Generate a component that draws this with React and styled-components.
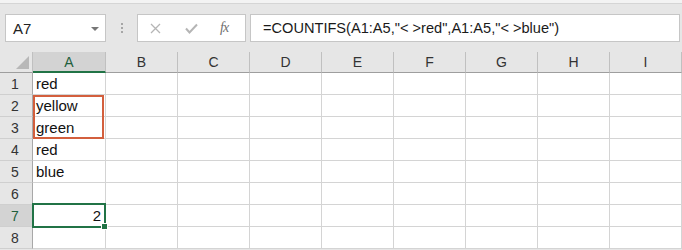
import React from "react";
import styled, { createGlobalStyle } from "styled-components";

const GlobalStyle = createGlobalStyle`
  html, body {
    margin: 0;
    padding: 0;
    background: #ffffff;
    font-family: "Liberation Sans", Arial, sans-serif;
  }
  #root {
    width: 682px;
    height: 250px;
    overflow: hidden;
  }
`;

const columns = ["A", "B", "C", "D", "E", "F", "G", "H", "I"];

const values = {
  1: { text: "red" },
  2: { text: "yellow" },
  3: { text: "green" },
  4: { text: "red" },
  5: { text: "blue" },
  7: { text: "2", number: true },
};

const Window = styled.div`
  width: 682px;
  height: 250px;
  display: flex;
  flex-direction: column;
  background: #e6e6e6;
`;

const TopStrip = styled.div`
  height: 3px;
  background: #f3f3f3;
  border-bottom: 1px solid #d5d5d5;
`;

const FormulaBar = styled.div`
  height: 48px;
  box-sizing: border-box;
  padding: 10px 2px 10px 5px;
  display: flex;
  align-items: stretch;
`;

const Box = styled.div`
  box-sizing: border-box;
  background: #ffffff;
  border: 1px solid #c6c6c6;
  display: flex;
  align-items: center;
`;

const NameBox = styled(Box)`
  width: 101px;
  padding: 0 6px 0 7px;
  justify-content: space-between;
  font-size: 15px;
  color: #222;
`;

const Caret = styled.span`
  width: 0;
  height: 0;
  border-left: 4px solid transparent;
  border-right: 4px solid transparent;
  border-top: 4px solid #777;
  margin-top: 1px;
`;

const Grip = styled.div`
  width: 31px;
  display: flex;
  flex-direction: column;
  align-items: center;
  justify-content: center;
  gap: 2px;

  span {
    width: 2px;
    height: 2px;
    background: #a6a6a6;
  }
`;

const ButtonBox = styled(Box)`
  width: 109px;
  margin-right: 4px;
  padding-left: 12px;
  gap: 24px;
`;

const FxLabel = styled.span`
  font-family: "Liberation Serif", "Times New Roman", serif;
  font-style: italic;
  font-size: 14px;
  color: #6f6f6f;
  letter-spacing: -1px;
  margin-left: -2px;
`;

const FormulaInput = styled(Box)`
  flex: 1;
  padding-left: 12px;
  font-size: 14.6px;
  color: #1a1a1a;
  white-space: pre;
`;

const Sheet = styled.div`
  position: relative;
  display: grid;
  grid-template-columns: 33px 73px repeat(8, 72px);
  grid-template-rows: 21px repeat(8, 22px);
  background: #ffffff;
  font-size: 15px;
`;

const Corner = styled.div`
  background: #e6e6e6;
  border-right: 1px solid #c0c0c0;
  border-bottom: 1px solid #9e9e9e;
  box-sizing: border-box;
  display: flex;
  align-items: flex-end;
  justify-content: flex-end;
  padding: 0 3px 3px 0;
`;

const ColHeader = styled.div`
  box-sizing: border-box;
  background: ${({ active }) => (active ? "#d3d3d3" : "#e6e6e6")};
  border-right: 1px solid #c0c0c0;
  border-bottom: ${({ active }) =>
    active ? "2px solid #217346" : "1px solid #9e9e9e"};
  display: flex;
  align-items: center;
  justify-content: center;
  font-size: 14px;
  color: ${({ active }) => (active ? "#1f5f3c" : "#333")};
`;

const RowHeader = styled.div`
  box-sizing: border-box;
  background: ${({ active }) => (active ? "#d3d3d3" : "#e6e6e6")};
  border-right: 1px solid #a8a8a8;
  border-bottom: 1px solid #cfcfcf;
  display: flex;
  align-items: center;
  justify-content: center;
  font-size: 14px;
  padding-right: 2px;
  color: ${({ active }) => (active ? "#1f5f3c" : "#333")};
`;

const Cell = styled.div`
  box-sizing: border-box;
  border-right: 1px solid #d4d4d4;
  border-bottom: 1px solid #d4d4d4;
  display: flex;
  align-items: center;
  justify-content: ${({ number }) => (number ? "flex-end" : "flex-start")};
  padding: 0 4px 0 3px;
  color: #111;
  white-space: nowrap;
  overflow: visible;
`;

const Highlight = styled.div`
  position: absolute;
  left: 33px;
  top: 43px;
  width: 71px;
  height: 44px;
  box-sizing: border-box;
  border: 2px solid #d35f3d;
  pointer-events: none;
`;

const Selection = styled.div`
  position: absolute;
  left: 32px;
  top: 151px;
  width: 74px;
  height: 25px;
  box-sizing: border-box;
  border: 2px solid #217346;
  pointer-events: none;
`;

const FillHandle = styled.div`
  position: absolute;
  left: 101px;
  top: 171px;
  width: 5px;
  height: 5px;
  background: #217346;
  border: 1px solid #ffffff;
`;

const App = () => {
  const rows = [1, 2, 3, 4, 5, 6, 7, 8];

  return (
    <>
      <GlobalStyle />
      <Window>
        <TopStrip />
        <FormulaBar>
          <NameBox>
            <span>A7</span>
            <Caret />
          </NameBox>
          <Grip>
            <span />
            <span />
            <span />
          </Grip>
          <ButtonBox>
            <svg width="11" height="11" viewBox="0 0 11 11">
              <path d="M1 1 L10 10 M10 1 L1 10" stroke="#b5b5b5" strokeWidth="1.3" />
            </svg>
            <svg width="13" height="11" viewBox="0 0 13 11">
              <path d="M1 5.5 L4.5 9.5 L12 1.5" stroke="#b5b5b5" strokeWidth="2" fill="none" />
            </svg>
            <FxLabel>fx</FxLabel>
          </ButtonBox>
          <FormulaInput>=COUNTIFS(A1:A5,"&lt; &gt;red",A1:A5,"&lt; &gt;blue")</FormulaInput>
        </FormulaBar>
        <Sheet>
          <Corner>
            <svg width="13" height="13" viewBox="0 0 13 13">
              <polygon points="13,0 13,13 0,13" fill="#b8b8b8" />
            </svg>
          </Corner>
          {columns.map((col) => (
            <ColHeader key={col} active={col === "A"}>
              {col}
            </ColHeader>
          ))}
          {rows.map((r) => (
            <React.Fragment key={r}>
              <RowHeader active={r === 7}>{r}</RowHeader>
              {columns.map((col) => (
                <Cell key={col} number={col === "A" && values[r]?.number}>
                  {col === "A" && values[r] ? values[r].text : ""}
                </Cell>
              ))}
            </React.Fragment>
          ))}
          <Highlight />
          <Selection />
          <FillHandle />
        </Sheet>
      </Window>
    </>
  );
};

export default App;
